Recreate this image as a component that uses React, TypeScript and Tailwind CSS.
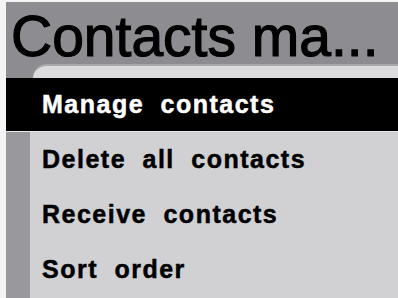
export default function App() {
  const items = ["Delete all contacts", "Receive contacts", "Sort order"];
  return (
    <div className="w-[398px] h-[298px] bg-[#f4f4f4] pl-[6px] pt-[2px] flex flex-col overflow-hidden">
      <div className="h-[62px] bg-[#8d8d91] flex items-center pl-[5px] pt-[6px]">
        <span className="text-[57px] leading-[56px] text-black whitespace-nowrap font-['Liberation_Sans',sans-serif] [-webkit-text-stroke:1.2px_black]">
          Contacts ma...
        </span>
      </div>
      <div className="h-[14px] bg-[#8d8d91] flex">
        <div className="ml-[27px] flex-1 rounded-tl-[14px] bg-[#dcdcde] border-t-[2px] border-[#a9a9ad]" />
      </div>
      <div className="h-[54px] bg-black flex items-center pl-[36px] border-b border-[#e6e6e8]">
        <span className="text-white text-[25px] font-bold tracking-[1.5px] [word-spacing:8px] font-['Liberation_Sans',sans-serif] leading-none [-webkit-text-stroke:0.5px_white]">
          Manage contacts
        </span>
      </div>
      <div className="flex-1 flex">
        <div className="w-[24px] bg-[#99999d]" />
        <div className="flex-1 bg-[#d1d1d3] flex flex-col">
          {items.map((t) => (
            <div key={t} className="h-[55px] flex items-center pl-[12px] shrink-0">
              <span className="text-black text-[25px] font-bold tracking-[1.5px] [word-spacing:8px] font-['Liberation_Sans',sans-serif] leading-none [-webkit-text-stroke:0.5px_black]">
                {t}
              </span>
            </div>
          ))}
        </div>
      </div>
    </div>
  );
}
